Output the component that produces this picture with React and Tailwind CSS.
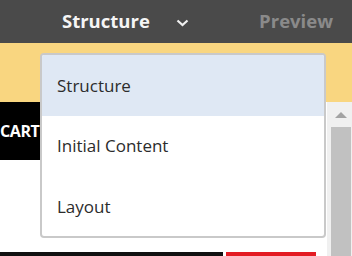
import React from "react";

const items = ["Structure", "Initial Content", "Layout"];

const App = () => {
  return (
    <div
      className="relative w-[352px] h-[256px] overflow-hidden bg-white"
      style={{ fontFamily: "'Open Sans', 'Noto Sans', sans-serif" }}
    >
      {/* top bar */}
      <div className="h-[43px] bg-[#4a4a4a] flex items-center">
        <span className="ml-[62px] text-[18.5px] font-bold text-[#f5f5f5] leading-none">
          Structure
        </span>
        <svg className="ml-[26px] mt-[2px]" width="13" height="8" viewBox="0 0 13 8">
          <path d="M1.5 1.5 L6.5 6 L11.5 1.5" fill="none" stroke="#f0f0f0" strokeWidth="2.2" />
        </svg>
        <span className="ml-auto mr-[19px] text-[18.5px] font-bold text-[#8a8a8a] leading-none">
          Preview
        </span>
      </div>

      {/* yellow band */}
      <div className="h-[59px] bg-[#f9d680]" />

      {/* content */}
      <div className="flex h-[154px]">
        <div className="flex-1 flex flex-col">
          <div className="h-[58px] w-[300px] bg-black flex items-center">
            <span className="text-[16px] font-bold text-white tracking-tight">CART</span>
          </div>
          <div className="flex-1" />
          <div className="h-[4px] flex gap-[3px]">
            <div className="w-[223px] bg-[#111]" />
            <div className="w-[90px] bg-[#e31b23]" />
          </div>
        </div>
        {/* scrollbar */}
        <div className="w-[25px] bg-[#f0f0f0] flex flex-col items-center pl-[2px]">
          <div className="h-[25px] flex items-center">
            <div className="w-0 h-0 border-l-[6px] border-r-[6px] border-b-[6px] border-l-transparent border-r-transparent border-b-[#a3a3a3]" />
          </div>
          <div className="flex-1 w-[20px] bg-[#c1c1c1]" />
        </div>
      </div>

      {/* dropdown */}
      <div className="absolute left-[40px] top-[53px] w-[286px] h-[185px] bg-white border-2 border-[#c9c9c9] rounded-[4px] overflow-hidden">
        {items.map((label, i) => (
          <div
            key={label}
            className={`h-[60.5px] flex items-center pl-[15px] text-[17px] text-[#2c2c2c] ${
              i === 0 ? "bg-[#dfe8f4]" : ""
            }`}
          >
            {label}
          </div>
        ))}
      </div>
    </div>
  );
};

export default App;
